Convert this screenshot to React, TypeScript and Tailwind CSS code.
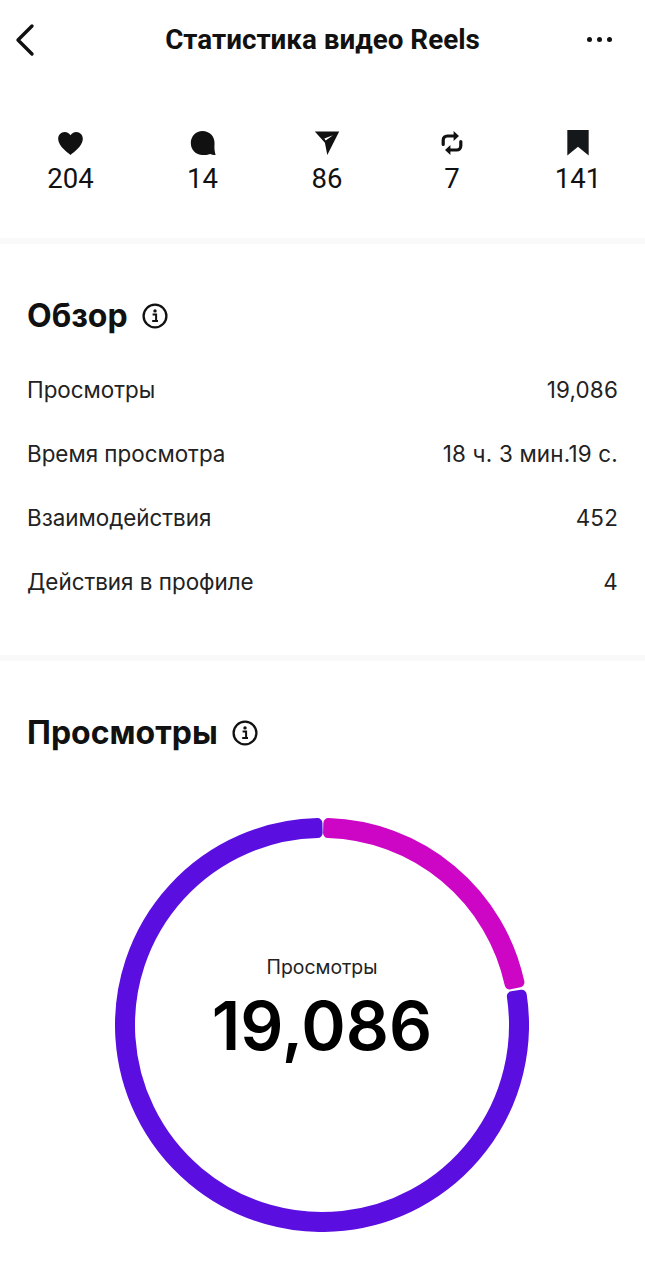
import React from 'react';

const font = { fontFamily: 'Roboto, "Noto Sans", sans-serif' };

function sector(a0: number, a1: number) {
  // annular sector, angles in degrees from the top, clockwise
  const cx = 207;
  const cy = 207;
  const ro = 202;
  const ri = 192;
  const pt = (r: number, a: number) => {
    const t = (a * Math.PI) / 180;
    return `${(cx + r * Math.sin(t)).toFixed(2)} ${(cy - r * Math.cos(t)).toFixed(2)}`;
  };
  const large = a1 - a0 > 180 ? 1 : 0;
  return `M${pt(ro, a0)} A${ro} ${ro} 0 ${large} 1 ${pt(ro, a1)} L${pt(ri, a1)} A${ri} ${ri} 0 ${large} 0 ${pt(ri, a0)} Z`;
}

function InfoIcon() {
  return (
    <svg width="26" height="26" viewBox="0 0 26 26" fill="none">
      <circle cx="13" cy="13" r="11.4" stroke="#111" strokeWidth="2.3" />
      <circle cx="13" cy="7.9" r="1.7" fill="#111" />
      <path d="M10.6 11.4h3.5v6.6h1.8M10.2 18h5.8" stroke="#111" strokeWidth="2" />
    </svg>
  );
}

const stats = [
  {
    value: '204',
    icon: (
      <svg width="27" height="25" viewBox="0 0 28 26">
        <path d="M14 25C11 22.2 1.5 16 1.2 8.6 1 4 4.2 1 8 1c2.6 0 4.800 1.300 6 3.400C15.200 2.300 17.400 1 20 1c3.800 0 7 3 6.800 7.600C26.500 16 17 22.200 14 25Z" fill="#111" />
      </svg>
    ),
  },
  {
    value: '14',
    icon: (
      <svg width="26" height="26" viewBox="0 0 26 26">
        <path d="M12.500 1C19.200 1 24.500 6 24.500 12.500c0 2.800-.2 5.500.1 7.700.2 1.800.6 3.500 1 4.800-1.600.2-3.700-.1-5.500-.9-2.100 1-4.900 1-7.600 1C5.800 25.100.8 19.500.8 13 .8 6.500 5.800 1 12.500 1Z" fill="#111" />
      </svg>
    ),
  },
  {
    value: '86',
    icon: (
      <svg width="26" height="26" viewBox="0 0 26 26">
        <path fillRule="evenodd" d="M.8 1.500h24.400L13.300 25 10.900 12.700.8 1.500ZM10.300 8.600l1.400 1.900 7.300-5.200-8.700 3.300Z" fill="#111" />
      </svg>
    ),
  },
  {
    value: '7',
    icon: (
      <svg width="22" height="26" viewBox="0 0 22 26" fill="none">
        <path d="M2.200 14.500v-4.300c0-2.400 1.700-4.200 4.100-4.200h7.700M19.800 11.500v4.300c0 2.400-1.700 4.200-4.100 4.200H8" stroke="#111" strokeWidth="3.200" strokeLinecap="round" />
        <path d="M12.600 1 18 6l-5.400 5ZM9.400 15 4 20l5.400 5Z" fill="#111" />
      </svg>
    ),
  },
  {
    value: '141',
    icon: (
      <svg width="24" height="26" viewBox="0 0 24 28">
        <path d="M.5 0h23v27.500L12 18 .5 27.500Z" fill="#15181a" />
      </svg>
    ),
  },
];

const rows = [
  ['Просмотры', '19,086'],
  ['Время просмотра', '18 ч. 3 мин.19 с.'],
  ['Взаимодействия', '452'],
  ['Действия в профиле', '4'],
];

const inter = 'font-[Inter,sans-serif]';

export default function App() {
  return (
    <div className="w-[645px] h-[1280px] bg-white overflow-hidden text-[#111]" style={font}>
      <header className="h-[80px] grid grid-cols-[80px_1fr_80px] items-center">
        <svg className="ml-[14px]" width="22" height="34" viewBox="0 0 22 34" fill="none">
          <path d="M18 3 4 17l14 14" stroke="#111" strokeWidth="3.400" strokeLinecap="round" strokeLinejoin="round" />
        </svg>
        <h1 className="text-center text-[27.800px] font-bold leading-none">Статистика видео Reels</h1>
        <div className="flex justify-end gap-[5px] mb-[2px] pr-[33px]">
          <span className="w-[5px] h-[5px] rounded-full bg-[#111]" />
          <span className="w-[5px] h-[5px] rounded-full bg-[#111]" />
          <span className="w-[5px] h-[5px] rounded-full bg-[#111]" />
        </div>
      </header>

      <section className="grid grid-cols-[141px_123px_126px_124px_128px] pt-[49px] h-[158px]">
        {stats.map(s => (
          <div key={s.value} className="flex flex-col items-center">
            <div className="h-[28px] flex items-center justify-center">{s.icon}</div>
            <span className="text-[27.500px] leading-[36px] mt-[4px]">{s.value}</span>
          </div>
        ))}
      </section>

      <div className="h-[6px] bg-[#f9f9f9]" />

      <section className={`px-[27px] pt-[54px] h-[411px] ${inter}`}>
        <div className="flex items-center gap-[14px] h-[36px]">
          <h2 className="text-[32px] font-bold leading-none">Обзор</h2>
          <InfoIcon />
        </div>
        <div className="mt-[36px] flex flex-col gap-[24px]">
          {rows.map(([label, value]) => (
            <div key={label} className="flex justify-between text-[22.400px] leading-[40px] text-[#222]">
              <span>{label}</span>
              <span className="tracking-[0.2px]">{value}</span>
            </div>
          ))}
        </div>
      </section>

      <div className="h-[6px] bg-[#f9f9f9]" />

      <section className={`pt-[54px] ${inter}`}>
        <div className="flex items-center gap-[14px] h-[36px] px-[27px]">
          <h2 className="text-[32px] font-bold leading-none">Просмотры</h2>
          <InfoIcon />
        </div>
        <div className="relative w-[414px] h-[414px] ml-[115px] mt-[67px]">
          <svg width="414" height="414" viewBox="0 0 414 414">
            <path d={sector(81.4, 358.7)} fill="#5a0fe0" stroke="#5a0fe0" strokeWidth="10" strokeLinejoin="round" />
            <path d={sector(1.8, 77.8)} fill="#cc06c4" stroke="#cc06c4" strokeWidth="10" strokeLinejoin="round" />
          </svg>
          <div className="absolute inset-0 flex flex-col items-center justify-center">
            <span className="text-[19.400px] leading-[24px] text-[#222] mt-[-34px]">Просмотры</span>
            <span className="text-[67.500px] font-semibold leading-[72px] text-black mt-[11px]">19,086</span>
          </div>
        </div>
      </section>
    </div>
  );
}
